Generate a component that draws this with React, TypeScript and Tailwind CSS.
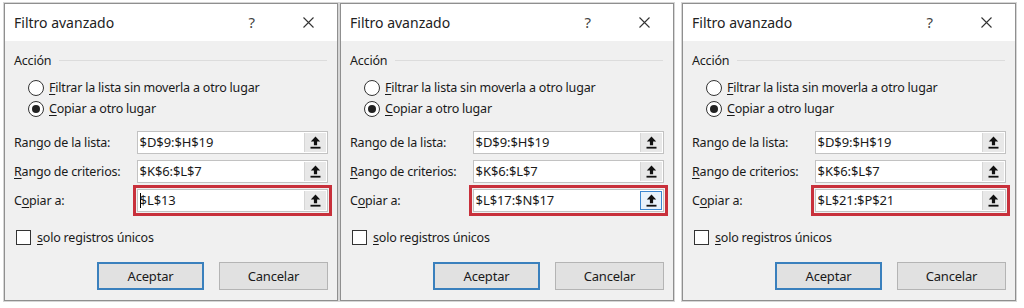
const PickIcon = () => (
  <svg width="11" height="13" viewBox="0 0 11 13">
    <polygon points="5.5,0.5 10.2,5.6 7.1,5.6 7.1,9.2 3.9,9.2 3.9,5.6 0.8,5.6" fill="#111" />
    <rect x="0.5" y="10.8" width="10" height="1.8" fill="#111" />
  </svg>
);

const RefInput = ({
  value,
  focused = false,
  cursor = false,
  highlight = false,
}: {
  value: string;
  focused?: boolean;
  cursor?: boolean;
  highlight?: boolean;
}) => (
  <div
    className={
      'flex h-[23px] w-[192px] items-stretch border border-[#c2c2c2] bg-white' +
      (highlight ? ' outline-[3px] outline-solid outline-offset-[1px] outline-[#c8303b]' : '')
    }
  >
    <div className="flex flex-1 items-center pl-[2px] text-[13px] tracking-[-0.1px] text-[#1a1a1a]">
      {cursor && <span className="mr-[-1px] h-[15px] w-px bg-black" />}
      {value}
    </div>
    <div
      className={
        'm-[1px] flex w-[22px] items-center justify-center ' +
        (focused ? 'border border-[#3b86d0] bg-[#e8f2fb]' : 'border-l border-[#d6d6d6] bg-[#e8e8e8]')
      }
    >
      <PickIcon />
    </div>
  </div>
);

const Radio = ({ checked, children }: { checked: boolean; children: React.ReactNode }) => (
  <div className="flex h-[21px] items-center pl-[14px]">
    <span className="flex h-[16px] w-[16px] items-center justify-center rounded-full border border-[#333] bg-white">
      {checked && <span className="h-[8px] w-[8px] rounded-full bg-[#222]" />}
    </span>
    <span className="ml-[5px]">{children}</span>
  </div>
);

const Row = ({ label, children }: { label: React.ReactNode; children: React.ReactNode }) => (
  <div className="flex h-[23px] items-center">
    <div className="w-[123px]">{label}</div>
    {children}
  </div>
);

const Dialog = ({
  copyTo,
  focused = false,
  cursor = false,
  className = '',
}: {
  copyTo: string;
  focused?: boolean;
  cursor?: boolean;
  className?: string;
}) => (
  <div
    className={
      'flex h-[298px] w-[334px] flex-col border border-[#8f8f8f] bg-[#f0f0f0] shadow-[0_0_0_1px_#d6d6d6] ' +
      className
    }
  >
    <div className="flex h-[37px] items-center bg-white pl-[9px] text-[14px] text-[#222]">
      <span>Filtro avanzado</span>
      <span className="ml-auto mr-[48px] text-[15px] text-[#444]">?</span>
      <svg width="11" height="11" viewBox="0 0 11 11" className="mr-[23px]">
        <path d="M0.5 0.5 L10.5 10.5 M10.5 0.5 L0.5 10.5" stroke="#333" strokeWidth="1.1" />
      </svg>
    </div>

    <div className="flex flex-1 flex-col px-[9px] pt-[11px] text-[12.5px] leading-[17px] tracking-[-0.2px] text-[#1a1a1a]">
      <div className="flex items-center">
        <span>Acción</span>
        <div className="ml-[8px] mr-[1px] h-px flex-1 bg-[#dcdcdc]" />
      </div>

      <div className="mt-[8px]">
        <Radio checked={false}>
          <span className="underline underline-offset-2">F</span>iltrar la lista sin moverla a otro lugar
        </Radio>
        <Radio checked={true}>
          <span className="underline underline-offset-2">C</span>opiar a otro lugar
        </Radio>
      </div>

      <div className="mt-[12px] flex flex-col gap-[6px]">
        <Row
          label={
            <>
              Ran<span className="underline underline-offset-2">g</span>o de la lista:
            </>
          }
        >
          <RefInput value="$D$9:$H$19" />
        </Row>
        <Row
          label={
            <>
              <span className="underline underline-offset-2">R</span>ango de criterios:
            </>
          }
        >
          <RefInput value="$K$6:$L$7" />
        </Row>
        <Row
          label={
            <>
              C<span className="underline underline-offset-2">o</span>piar a:
            </>
          }
        >
          <RefInput value={copyTo} focused={focused} cursor={cursor} highlight />
        </Row>
      </div>

      <div className="mt-[17px] flex items-center pl-[2px]">
        <span className="h-[15px] w-[15px] border border-[#333] bg-white" />
        <span className="ml-[6px]">
          <span className="underline underline-offset-2">s</span>olo registros únicos
        </span>
      </div>

      <div className="mt-[16px] flex">
        <button className="ml-[83px] h-[28px] w-[107px] border-2 border-[#3a80bd] bg-[#e1e1e1] text-[13px] text-[#1a1a1a]">
          Aceptar
        </button>
        <button className="ml-[15px] h-[28px] w-[109px] border border-[#b4b4b4] bg-[#e1e1e1] text-[13px] text-[#1a1a1a]">
          Cancelar
        </button>
      </div>
    </div>
  </div>
);

export default function App() {
  return (
    <div className="flex h-[308px] w-[1024px] bg-white pt-[3px] font-['Segoe_UI','Noto_Sans',sans-serif]">
      <Dialog copyTo="$L$13" cursor className="ml-[4px]" />
      <Dialog copyTo="$L$17:$N$17" focused className="ml-[2px]" />
      <Dialog copyTo="$L$21:$P$21" className="ml-[8px]" />
    </div>
  );
}
